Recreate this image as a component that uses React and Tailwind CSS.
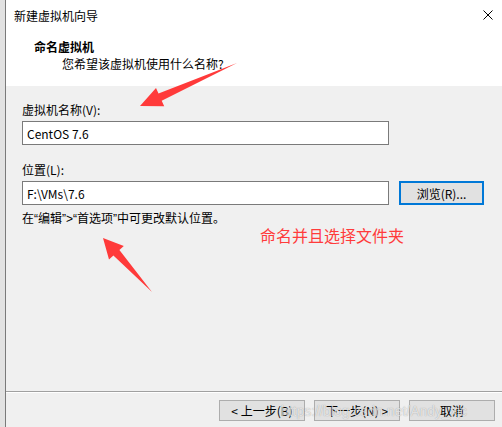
export default function App() {
  const font = "font-['Microsoft_YaHei','Noto_Sans_CJK_SC',sans-serif]";
  const q = "font-['Liberation_Sans',sans-serif]";

  return (
    <div className={`relative flex h-[427px] w-[502px] overflow-hidden text-[12px] leading-[17px] text-black ${font}`}>
      <div className="w-[5px] bg-[#e2e2e2]" />
      <div className="w-px bg-[#7a7a7a]" />

      <div className="flex flex-1 flex-col bg-[#f0f0f0]">
        {/* title + header */}
        <div className="h-[86px] bg-white">
          <div className="flex h-[30px] items-center justify-between pl-[8px] pr-[9px]">
            <span>新建虚拟机向导</span>
            <svg width="10" height="10" viewBox="0 0 10 10" className="text-black">
              <path d="M0.5 0.5 L9.5 9.5 M9.5 0.5 L0.5 9.5" stroke="currentColor" strokeWidth="1" />
            </svg>
          </div>
          <div className="pl-[28px] pt-[8px]">
            <p className="font-bold">命名虚拟机</p>
            <p className="pl-[28px]">您希望该虚拟机使用什么名称?</p>
          </div>
        </div>

        {/* body */}
        <div className="flex-1 pl-[16px] pt-[15px]">
          <p>虚拟机名称(V):</p>
          <div className="mt-[3px] flex h-[24px] w-[367px] items-center border border-[#7a7a7a] bg-white px-[4px]">
            CentOS 7.6
          </div>

          <p className="mt-[16px]">位置(L):</p>
          <div className="mt-[3px] flex items-center gap-[10px]">
            <div className="flex h-[24px] w-[367px] items-center border border-[#7a7a7a] bg-white px-[4px]">
              F:\VMs\7.6
            </div>
            <button
              type="button"
              className="flex h-[24px] w-[85px] items-center justify-center border-2 border-[#0078d7] bg-[#e1e1e1]"
            >
              浏览(R)...
            </button>
          </div>

          <p className="mt-[4px]">
            在<span className={q}>“</span>编辑<span className={q}>”&gt;“</span>首选项<span className={q}>”</span>中可更改默认位置。
          </p>
        </div>

        {/* footer */}
        <div className="h-[36px] border-t border-[#a0a0a0]">
          <div className="h-px bg-white" />
          <div className="flex justify-end gap-[9px] pr-[7px] pt-[7px]">
            <button type="button" className="h-[21px] w-[86px] border border-[#adadad] bg-[#e1e1e1]">
              &lt; 上一步(B)
            </button>
            <button type="button" className="h-[21px] w-[86px] border border-[#adadad] bg-[#e1e1e1]">
              下一步(N) &gt;
            </button>
            <button type="button" className="h-[21px] w-[86px] border border-[#adadad] bg-[#e1e1e1]">
              取消
            </button>
          </div>
        </div>
      </div>

      {/* annotations drawn over the screenshot */}
      <span className="absolute left-[260px] top-[225px] text-[16px] leading-[20px] text-[#ff3b3b]">
        命名并且选择文件夹
      </span>
      <svg className="pointer-events-none absolute left-0 top-0" width="502" height="427">
        <polygon
          points="237,63 158.5,93.4 156,88 140,106 164.2,106.2 161.7,100.8"
          fill="#ff3a3a"
        />
        <polygon
          points="152,292 119.4,250.1 123.8,246.1 103,238 109,259.5 113.4,255.5"
          fill="#ff3a3a"
        />
      </svg>
      <span className="pointer-events-none absolute left-[281px] top-[402px] font-['Liberation_Sans',sans-serif] text-[14px] leading-[18px] text-white/70 [text-shadow:0_0_1px_rgba(0,0,0,0.35)]">
        https://blog.csdn.net/Andy_xjc
      </span>
    </div>
  );
}
